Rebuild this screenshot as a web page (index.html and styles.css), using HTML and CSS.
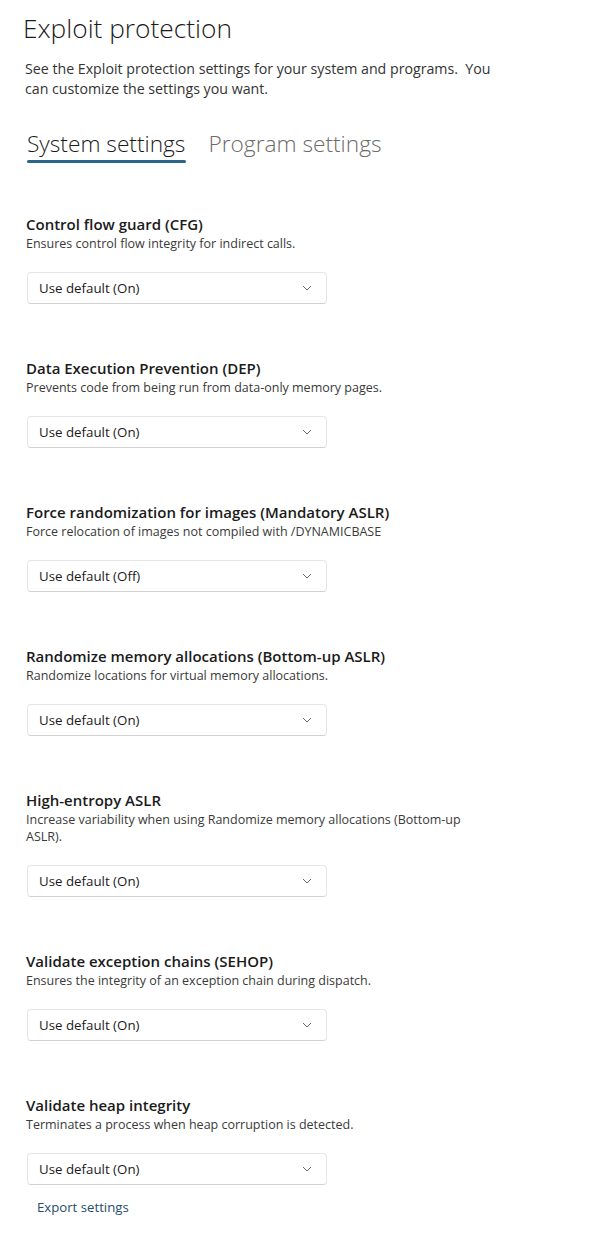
FILE: index.html
```html
<!DOCTYPE html>
<html lang="en">
<head>
<meta charset="utf-8">
<title>Exploit protection</title>
<link rel="stylesheet" href="styles.css">
</head>
<body>
<main class="page">
  <h1 class="title">Exploit protection</h1>
  <p class="intro">See the Exploit protection settings for your system and programs.&nbsp; You<br>can customize the settings you want.</p>

  <nav class="tabs">
    <a class="tab tab-active">System settings</a>
    <a class="tab">Program settings</a>
  </nav>

  <section class="settings">
    <div class="setting">
      <h2 class="setting-title">Control flow guard (CFG)</h2>
      <p class="setting-desc">Ensures control flow integrity for indirect calls.</p>
      <div class="select"><span>Use default (On)</span><svg class="chev" width="10" height="6" viewBox="0 0 10 6"><path d="M1 1 L5 5 L9 1" fill="none" stroke="#6b6b6b" stroke-width="1"/></svg></div>
    </div>
    <div class="setting">
      <h2 class="setting-title">Data Execution Prevention (DEP)</h2>
      <p class="setting-desc">Prevents code from being run from data-only memory pages.</p>
      <div class="select"><span>Use default (On)</span><svg class="chev" width="10" height="6" viewBox="0 0 10 6"><path d="M1 1 L5 5 L9 1" fill="none" stroke="#6b6b6b" stroke-width="1"/></svg></div>
    </div>
    <div class="setting">
      <h2 class="setting-title">Force randomization for images (Mandatory ASLR)</h2>
      <p class="setting-desc">Force relocation of images not compiled with /DYNAMICBASE</p>
      <div class="select"><span>Use default (Off)</span><svg class="chev" width="10" height="6" viewBox="0 0 10 6"><path d="M1 1 L5 5 L9 1" fill="none" stroke="#6b6b6b" stroke-width="1"/></svg></div>
    </div>
    <div class="setting">
      <h2 class="setting-title">Randomize memory allocations (Bottom-up ASLR)</h2>
      <p class="setting-desc">Randomize locations for virtual memory allocations.</p>
      <div class="select"><span>Use default (On)</span><svg class="chev" width="10" height="6" viewBox="0 0 10 6"><path d="M1 1 L5 5 L9 1" fill="none" stroke="#6b6b6b" stroke-width="1"/></svg></div>
    </div>
    <div class="setting">
      <h2 class="setting-title">High-entropy ASLR</h2>
      <p class="setting-desc">Increase variability when using Randomize memory allocations (Bottom-up<br>ASLR).</p>
      <div class="select"><span>Use default (On)</span><svg class="chev" width="10" height="6" viewBox="0 0 10 6"><path d="M1 1 L5 5 L9 1" fill="none" stroke="#6b6b6b" stroke-width="1"/></svg></div>
    </div>
    <div class="setting">
      <h2 class="setting-title">Validate exception chains (SEHOP)</h2>
      <p class="setting-desc">Ensures the integrity of an exception chain during dispatch.</p>
      <div class="select"><span>Use default (On)</span><svg class="chev" width="10" height="6" viewBox="0 0 10 6"><path d="M1 1 L5 5 L9 1" fill="none" stroke="#6b6b6b" stroke-width="1"/></svg></div>
    </div>
    <div class="setting">
      <h2 class="setting-title">Validate heap integrity</h2>
      <p class="setting-desc">Terminates a process when heap corruption is detected.</p>
      <div class="select"><span>Use default (On)</span><svg class="chev" width="10" height="6" viewBox="0 0 10 6"><path d="M1 1 L5 5 L9 1" fill="none" stroke="#6b6b6b" stroke-width="1"/></svg></div>
    </div>
  </section>

  <a class="export">Export settings</a>
</main>
</body>
</html>
```

FILE: styles.css
```css
html, body {
  margin: 0;
  padding: 0;
  background: #ffffff;
}

body {
  font-family: "Open Sans", "Noto Sans", sans-serif;
  color: #1b1b1b;
}

.page {
  padding: 10px 0 0 23px;
  display: flex;
  flex-direction: column;
  align-items: flex-start;
}

.title {
  margin: 0;
  font-size: 26.3px;
  line-height: 36px;
  font-weight: 300;
  color: #1b1b1b;
}

.intro {
  margin: 13px 0 0 2px;
  font-size: 14.2px;
  line-height: 20px;
  color: #333333;
}

.tabs {
  margin: 30px 0 0 4px;
  display: flex;
  gap: 23px;
}

.tab {
  position: relative;
  font-size: 22.7px;
  line-height: 30px;
  font-weight: 300;
  color: #6b6b6b;
  padding-bottom: 4px;
}

.tab-active {
  color: #1b1b1b;
}

.tab-active::after {
  content: "";
  position: absolute;
  left: 0;
  right: -1px;
  bottom: 0;
  height: 3px;
  border-radius: 2px;
  background: #2b6587;
}

.settings {
  margin-top: 51px;
  margin-left: 3px;
  display: flex;
  flex-direction: column;
  gap: 54px;
}

.setting {
  display: flex;
  flex-direction: column;
  align-items: flex-start;
}

.setting-title {
  margin: 0;
  font-size: 15px;
  line-height: 20px;
  font-weight: 600;
  color: #1b1b1b;
}

.setting-desc {
  margin: 0;
  padding-top: 1px;
  font-size: 12.5px;
  line-height: 17px;
  color: #3a3a3a;
}

.select {
  margin-top: 20px;
  margin-left: 1px;
  box-sizing: border-box;
  width: 300px;
  height: 32px;
  padding: 0 14px 0 11px;
  display: flex;
  align-items: center;
  justify-content: space-between;
  border: 1px solid #e6e6e6;
  border-bottom-color: #d2d2d2;
  border-radius: 4px;
  background: #ffffff;
  font-size: 13.3px;
  color: #1b1b1b;
}

.chev {
  display: block;
}

.export {
  margin: 12px 0 0 14px;
  font-size: 13.2px;
  line-height: 20px;
  color: #1f4d6d;
}
```
